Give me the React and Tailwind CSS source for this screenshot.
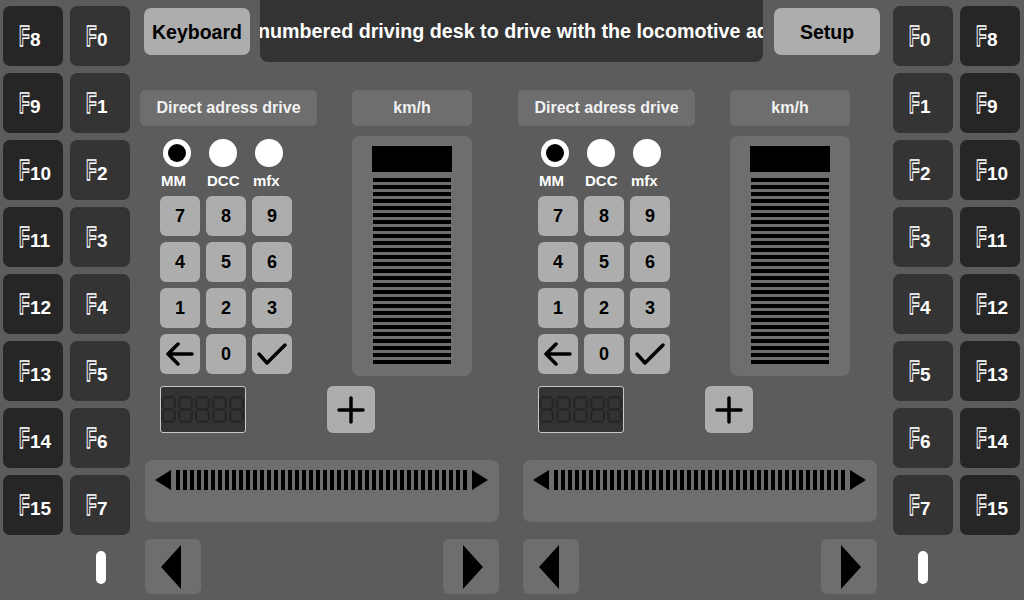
import React from "react";

const range = (n) => Array.from({ length: n }, (_, i) => i);

function FKey({ n, dark }) {
  return (
    <div
      className={`h-[60px] w-[60px] rounded-[7px] pl-[16px] pt-[16px] leading-[29px] ${
        dark ? "bg-[#262626] text-[#262626]" : "bg-[#343434] text-[#343434]"
      }`}
    >
      <span className="inline-block w-[11px]">
        <span className="inline-block origin-left scale-x-[0.6] text-[29px] font-bold [-webkit-text-stroke:1.4px_white]">
          F
        </span>
      </span>
      <span className="text-[19px] font-bold text-white">{n}</span>
    </div>
  );
}

function FColumn({ mirrored, pillOffset }) {
  const keys = [];
  for (let i = 0; i < 8; i++) {
    const outer = <FKey key={`o${i}`} n={i + 8} dark />;
    const inner = <FKey key={`i${i}`} n={i} />;
    if (mirrored) keys.push(inner, outer);
    else keys.push(outer, inner);
  }
  return (
    <div className="flex flex-col">
      <div className="grid grid-cols-[60px_60px] gap-[7px]">{keys}</div>
      <div className={`mt-[16px] h-[33px] w-[10px] rounded-full bg-white ${pillOffset}`} />
    </div>
  );
}

function ArrowLeftIcon() {
  return (
    <svg width="30" height="24" viewBox="0 0 30 24" fill="none" stroke="black" strokeWidth="3.5" strokeLinecap="round" strokeLinejoin="round">
      <path d="M3 12H27M13 2L3 12L13 22" />
    </svg>
  );
}

function CheckIcon() {
  return (
    <svg width="32" height="24" viewBox="0 0 32 24" fill="none" stroke="black" strokeWidth="3.5" strokeLinecap="round" strokeLinejoin="round">
      <path d="M3 12L11 21L29 3" />
    </svg>
  );
}

function PlusIcon() {
  return (
    <svg width="28" height="28" viewBox="0 0 28 28" fill="none" stroke="black" strokeWidth="3.5" strokeLinecap="round">
      <path d="M14 2V26M2 14H26" />
    </svg>
  );
}

function SegmentDisplay() {
  const segs = [];
  range(5).forEach((i) => {
    const x = 1 + i * 17;
    const c = "#262626";
    const t = 2.5;
    segs.push(
      <rect key={`a${i}`} x={x + 2} y={10} width={11} height={t} fill={c} />,
      <rect key={`g${i}`} x={x + 2} y={22.3} width={11} height={t} fill={c} />,
      <rect key={`d${i}`} x={x + 2} y={34.5} width={11} height={t} fill={c} />,
      <rect key={`f${i}`} x={x} y={12.5} width={t} height={9.8} fill={c} />,
      <rect key={`e${i}`} x={x} y={24.8} width={t} height={9.7} fill={c} />,
      <rect key={`b${i}`} x={x + 12.5} y={12.5} width={t} height={9.8} fill={c} />,
      <rect key={`c${i}`} x={x + 12.5} y={24.8} width={t} height={9.7} fill={c} />
    );
  });
  return (
    <div className="ml-[20px] h-[47px] w-[86px] overflow-hidden rounded-[3px] border border-[#c8c8c8] bg-[#333333]">
      <svg width="84" height="45" viewBox="1 1 84 45">
        {segs}
      </svg>
    </div>
  );
}

function Pad({ children }) {
  return (
    <div className="flex h-[40px] w-[40px] items-center justify-center rounded-[6px] bg-[#adadad] text-[18px] font-bold text-black">
      {children}
    </div>
  );
}

function Panel() {
  return (
    <div className="flex w-[360px] flex-col">
      <div className="flex">
        <div className="flex h-[36px] w-[177px] items-center justify-center rounded-[5px] bg-[#6e6e6e] text-[16px] font-bold text-[#f2f2f2]">
          Direct adress drive
        </div>
        <div className="ml-[35px] flex h-[36px] w-[120px] items-center justify-center rounded-[5px] bg-[#6e6e6e] text-[16px] font-bold text-[#f2f2f2]">
          km/h
        </div>
      </div>

      <div className="mt-[10px] flex">
        <div className="flex w-[212px] flex-col">
          <div className="ml-[21px] mt-[3px] flex">
            {["MM", "DCC", "mfx"].map((l, i) => (
              <div key={l} className="flex w-[46px] flex-col">
                <div className="ml-[2px] flex h-[28px] w-[28px] items-center justify-center rounded-full bg-white">
                  {i === 0 && <div className="h-[18px] w-[18px] rounded-full bg-black" />}
                </div>
                <div className="mt-[6px] text-[15px] font-bold leading-[15px] text-white">{l}</div>
              </div>
            ))}
          </div>
          <div className="ml-[20px] mt-[8px] grid w-[132px] grid-cols-[40px_40px_40px] gap-[6px]">
            {["7", "8", "9", "4", "5", "6", "1", "2", "3"].map((d) => (
              <Pad key={d}>{d}</Pad>
            ))}
            <Pad>
              <ArrowLeftIcon />
            </Pad>
            <Pad>0</Pad>
            <Pad>
              <CheckIcon />
            </Pad>
          </div>
        </div>
        <div className="flex h-[240px] w-[120px] flex-col rounded-[8px] bg-[#6e6e6e] pt-[10px]">
          <div className="ml-[20px] h-[26px] w-[80px] bg-black" />
          <div className="ml-[21px] mt-[6px] flex w-[78px] flex-col gap-[3px]">
            {range(27).map((i) => (
              <div key={i} className="h-[4px] bg-black" />
            ))}
          </div>
        </div>
      </div>

      <div className="mt-[10px] flex">
        <SegmentDisplay />
        <div className="ml-[81px] flex h-[47px] w-[48px] items-center justify-center rounded-[6px] bg-[#adadad]">
          <PlusIcon />
        </div>
      </div>

      <div className="ml-[5px] mt-[27px] flex h-[62px] w-[354px] items-start rounded-[8px] bg-[#6e6e6e] pl-[10px] pt-[10px]">
        <svg width="16" height="20" viewBox="0 0 16 20">
          <path d="M16 0V20L0 10Z" fill="black" />
        </svg>
        <div className="ml-[5px] flex gap-[3px]">
          {range(42).map((i) => (
            <div key={i} className="h-[20px] w-[4px] bg-black" />
          ))}
        </div>
        <svg className="ml-[5px]" width="16" height="20" viewBox="0 0 16 20">
          <path d="M0 0V20L16 10Z" fill="black" />
        </svg>
      </div>

      <div className="ml-[5px] mt-[17px] flex w-[354px] justify-between">
        <div className="flex h-[55px] w-[56px] items-center rounded-[6px] bg-[#6e6e6e] pl-[16px]">
          <svg width="20" height="44" viewBox="0 0 20 44">
            <path d="M20 0V44L0 22Z" fill="black" />
          </svg>
        </div>
        <div className="flex h-[55px] w-[56px] items-center rounded-[6px] bg-[#6e6e6e] pl-[20px]">
          <svg width="20" height="44" viewBox="0 0 20 44">
            <path d="M0 0V44L20 22Z" fill="black" />
          </svg>
        </div>
      </div>
    </div>
  );
}

export default function App() {
  return (
    <div className="flex h-[600px] w-[1024px] overflow-hidden bg-[#5c5c5c] font-['Liberation_Sans',Arial,sans-serif]">
      <div className="pl-[3px] pt-[6px]">
        <FColumn pillOffset="ml-[93px]" />
      </div>

      <div className="flex w-[763px] flex-col">
        <div className="flex items-start pl-[14px]">
          <div className="mt-[8px] flex h-[47px] w-[106px] items-center justify-center rounded-[7px] bg-[#adadad] pt-[2px] text-[19.5px] font-bold text-black">
            Keyboard
          </div>
          <div className="ml-[10px] flex h-[62px] w-[503px] items-center overflow-hidden rounded-b-[8px] bg-[#333333] pt-[2px]">
            <span className="-ml-[2px] whitespace-nowrap text-[19.7px] font-bold text-white">
              numbered driving desk to drive with the locomotive ad
            </span>
          </div>
          <div className="ml-[11px] mt-[8px] flex h-[47px] w-[106px] items-center justify-center rounded-[7px] bg-[#adadad] pt-[2px] text-[19.5px] font-bold text-black">
            Setup
          </div>
        </div>

        <div className="mt-[28px] flex gap-[18px] pl-[10px]">
          <Panel />
          <Panel />
        </div>
      </div>

      <div className="pt-[6px]">
        <FColumn mirrored pillOffset="ml-[25px]" />
      </div>
    </div>
  );
}
